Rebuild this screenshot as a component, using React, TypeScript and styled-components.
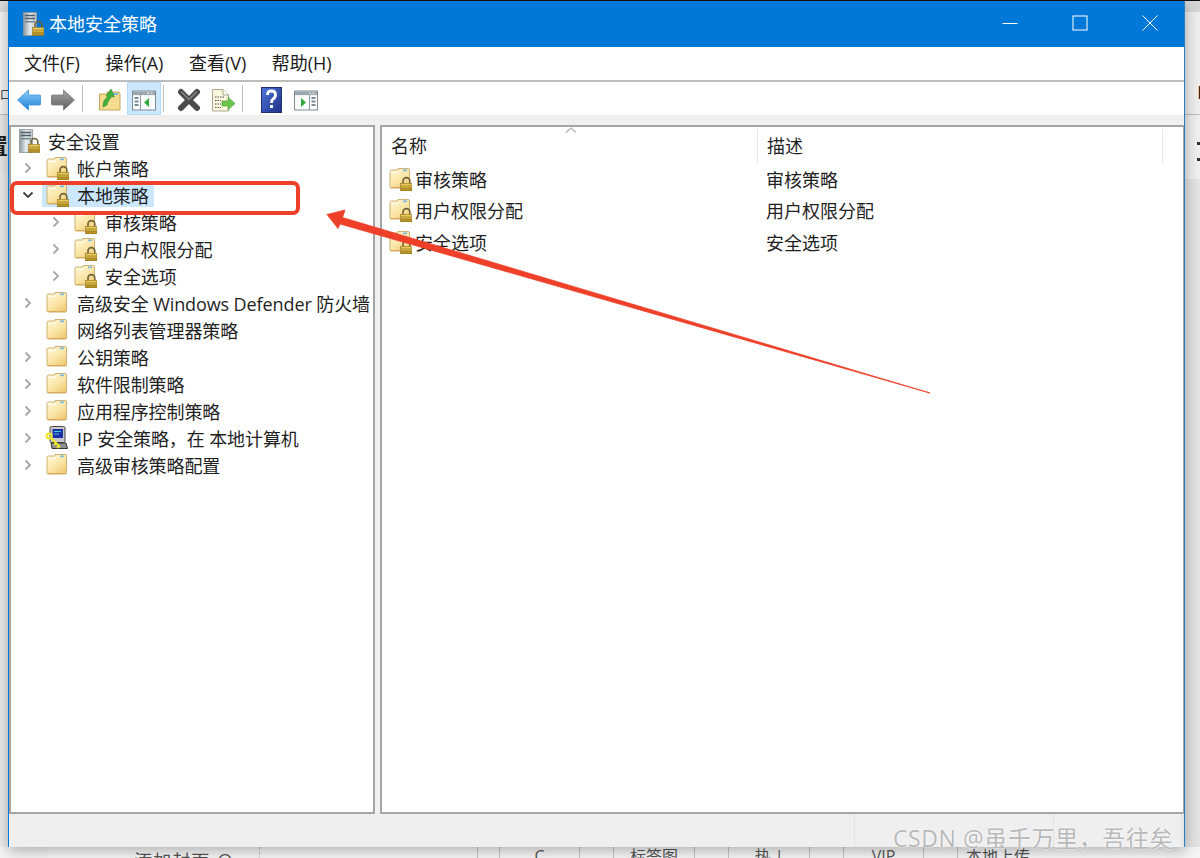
import styled, { createGlobalStyle } from 'styled-components';

const FONT = '"Open Sans", "Noto Sans CJK SC", "Noto Sans", sans-serif';

const GlobalStyle = createGlobalStyle`
  html, body {
    margin: 0;
    padding: 0;
    background: #f4f4f4;
  }
  * {
    box-sizing: border-box;
  }
`;

// ---------- icons ----------

const FolderIcon = ({ lock = false }: { lock?: boolean }) => (
  <svg width="24" height="24" viewBox="0 0 24 24">
    <defs>
      <linearGradient id="folderFill" x1="0" y1="0" x2="0.7" y2="1">
        <stop offset="0" stopColor="#fff8d8" />
        <stop offset="0.6" stopColor="#fbe6a8" />
        <stop offset="1" stopColor="#f0cc78" />
      </linearGradient>
      <linearGradient id="lockFill" x1="0" y1="0" x2="0" y2="1">
        <stop offset="0" stopColor="#f2d566" />
        <stop offset="1" stopColor="#a98518" />
      </linearGradient>
    </defs>
    <path d="M2 4.5 Q2 3 3.5 3 H10 V1.5 H20 Q21.5 1.5 21.5 3 V20 Q21.5 21 20.5 21 H3 Q2 21 2 20 Z" fill="url(#folderFill)" stroke="#cdb273" strokeWidth="1" />
    <path d="M3 5 H9 L11 3 V6 H3 Z" fill="#fff" opacity="0.7" />
    <rect x="15" y="2.4" width="4" height="1.8" fill="#7cbce0" />
    <path d="M3 20.5 H20.5" stroke="#d7a95a" strokeWidth="1" />
    {lock && (
      <g>
        <path d="M15 17 V14 a3.4 3.4 0 0 1 6.8 0 V17" fill="none" stroke="#6e6238" strokeWidth="1.6" />
        <rect x="12.5" y="16.4" width="11.5" height="7.6" fill="url(#lockFill)" stroke="#93741c" strokeWidth="0.6" />
        <path d="M13 19 H23.5 M13 21.5 H23.5" stroke="#8e701c" strokeWidth="0.7" opacity="0.7" />
      </g>
    )}
  </svg>
);

const ServerIcon = () => (
  <svg width="21" height="24" viewBox="0 0 21 24">
    <defs>
      <linearGradient id="towerFill" x1="0" y1="0" x2="1" y2="0">
        <stop offset="0" stopColor="#8d979c" />
        <stop offset="0.5" stopColor="#e6ebee" />
        <stop offset="1" stopColor="#bcc5ca" />
      </linearGradient>
      <linearGradient id="serverLock" x1="0" y1="0" x2="0" y2="1">
        <stop offset="0" stopColor="#f2d566" />
        <stop offset="1" stopColor="#a98518" />
      </linearGradient>
    </defs>
    <rect x="0.5" y="0.5" width="13" height="23" fill="url(#towerFill)" stroke="#8c979d" strokeWidth="0.8" />
    <path d="M2 3.5 H12 M2 6.5 H12" stroke="#4f5e68" strokeWidth="1.5" />
    <rect x="2" y="9" width="10" height="1.4" fill="#70808a" />
    <path d="M12 16 V13 a3.4 3.4 0 0 1 6.8 0 V16" fill="none" stroke="#6e6238" strokeWidth="1.5" />
    <rect x="9.5" y="15.5" width="11.5" height="8" fill="url(#serverLock)" stroke="#93741c" strokeWidth="0.6" />
    <path d="M10 18 H20.5 M10 20.8 H20.5" stroke="#8e701c" strokeWidth="0.7" opacity="0.7" />
  </svg>
);

const KeyMonitorIcon = () => (
  <svg width="24" height="24" viewBox="0 0 24 24">
    <rect x="5" y="0.5" width="15" height="16" rx="1.5" fill="#c8c8c8" stroke="#4a4a4a" strokeWidth="1" />
    <rect x="7.5" y="3" width="10.5" height="9" fill="#1c2fa8" />
    <path d="M9 5.5 H16 M9 8 H14" stroke="#39d0c8" strokeWidth="1" />
    <path d="M6 17 H21 L22.5 22.5 H7 Z" fill="#8f8f8f" stroke="#333" strokeWidth="1" />
    <circle cx="4" cy="10" r="2.6" fill="none" stroke="#f3e82a" strokeWidth="2" />
    <path d="M6 12 L15 21 M11 17 L9 19 M14 20 L12 22" stroke="#f3e82a" strokeWidth="2" />
  </svg>
);

const BackIcon = () => (
  <svg width="24" height="24" viewBox="0 0 24 24">
    <defs>
      <linearGradient id="backFill" x1="0" y1="0" x2="0" y2="1">
        <stop offset="0" stopColor="#8ed0fb" />
        <stop offset="1" stopColor="#1c80d8" />
      </linearGradient>
    </defs>
    <path d="M0.5 12 L11.5 2 V7 H22 Q24 7 24 9 V15 Q24 17 22 17 H11.5 V22 Z" fill="url(#backFill)" stroke="#3f93d8" strokeWidth="0.8" />
  </svg>
);

const ForwardIcon = () => (
  <svg width="24" height="24" viewBox="0 0 24 24">
    <defs>
      <linearGradient id="fwdFill" x1="0" y1="0" x2="0" y2="1">
        <stop offset="0" stopColor="#a5a5a5" />
        <stop offset="1" stopColor="#5f5f5f" />
      </linearGradient>
    </defs>
    <path d="M23.5 12 L12.5 2 V7 H2 Q0 7 0 9 V15 Q0 17 2 17 H12.5 V22 Z" fill="url(#fwdFill)" stroke="#767676" strokeWidth="0.8" />
  </svg>
);

const FolderUpIcon = () => (
  <svg width="24" height="24" viewBox="0 0 24 24">
    <path d="M1.5 6 H9 V4 H20 Q22 4 22 6 V22 H1.5 Z" fill="#f6dc8e" stroke="#c3a45a" strokeWidth="1" />
    <rect x="14" y="5" width="6" height="2" fill="#7cbce0" />
    <path d="M5 19 Q5 11 10 9 L8 8 L13 1 L16.5 9 L14 8.6 Q10 12 9 17 Z" fill="#41ae3d" stroke="#2c8a2a" strokeWidth="0.6" />
  </svg>
);

const PaneIcon = ({ flip = false }: { flip?: boolean }) => (
  <svg width="24" height="24" viewBox="0 0 24 24">
    <rect x="0.5" y="3" width="23" height="19" fill="#fbfcfd" stroke="#7f8b94" strokeWidth="1" />
    <rect x="1" y="3.5" width="22" height="3.6" fill="#9aa5ad" />
    <path d="M15 5.2 H17 M18.5 5.2 H20.5" stroke="#fff" strokeWidth="1" />
    {flip ? (
      <g>
        <path d="M15.5 7 V22" stroke="#8d99a2" strokeWidth="1" />
        <path d="M17.5 10 H21.5 M17.5 13.5 H21.5 M17.5 17 H21.5" stroke="#7b8b98" strokeWidth="2" />
        <path d="M7 10 L12 14.5 L7 19 Z" fill="#2faa3a" />
      </g>
    ) : (
      <g>
        <path d="M8.5 7 V22" stroke="#8d99a2" strokeWidth="1" />
        <path d="M2.5 10 H6.5 M2.5 13.5 H6.5 M2.5 17 H6.5" stroke="#7b8b98" strokeWidth="2" />
        <path d="M17 10 L12 14.5 L17 19 Z" fill="#2faa3a" />
      </g>
    )}
  </svg>
);

const DeleteIcon = () => (
  <svg width="24" height="24" viewBox="0 0 24 24">
    <path d="M4 4 L20 20 M20 4 L4 20" stroke="#4b4b4b" strokeWidth="6" strokeLinecap="round" />
    <path d="M4.5 4 L12 11.5 M19.5 4 L13 10.5" stroke="#8b8b8b" strokeWidth="1.4" strokeLinecap="round" />
  </svg>
);

const ExportIcon = () => (
  <svg width="24" height="24" viewBox="0 0 24 24">
    <path d="M1.5 1.5 H12 L17.5 7 V23 H1.5 Z" fill="#fbf7dc" stroke="#a9a78f" strokeWidth="1" />
    <path d="M12 1.5 V7 H17.5" fill="#fff" stroke="#a9a78f" strokeWidth="1" />
    <path d="M4 9 H13 M4 12.5 H10 M4 16 H10 M4 19.5 H10" stroke="#555" strokeWidth="1" strokeDasharray="1.5 1" />
    <path d="M11 13 H17 V9 L24 15.5 L17 22 V18 H11 Z" fill="#6cc54c" stroke="#4b9e35" strokeWidth="0.6" />
  </svg>
);

const HelpIcon = () => (
  <svg width="22" height="26" viewBox="0 0 22 26">
    <defs>
      <linearGradient id="helpFill" x1="0" y1="0" x2="1" y2="1">
        <stop offset="0" stopColor="#4f78d8" />
        <stop offset="1" stopColor="#1c2f88" />
      </linearGradient>
    </defs>
    <rect x="0.5" y="0.5" width="20" height="25" fill="url(#helpFill)" stroke="#24306e" strokeWidth="1" />
    <path d="M6.5 8 Q6.5 4 10.5 4 Q14.5 4 14.5 8 Q14.5 10.5 12 12 Q10.5 13 10.5 16" fill="none" stroke="#fff" strokeWidth="2.8" />
    <rect x="9" y="18" width="3" height="3" fill="#fff" />
  </svg>
);

const Chevron = ({ open = false }: { open?: boolean }) => (
  <svg width="14" height="14" viewBox="0 0 14 14">
    {open ? (
      <path d="M2.5 4.5 L7 9 L11.5 4.5" fill="none" stroke="#404040" strokeWidth="1.8" />
    ) : (
      <path d="M4.5 2.5 L9 7 L4.5 11.5" fill="none" stroke="#a6a6a6" strokeWidth="1.8" />
    )}
  </svg>
);

// ---------- data ----------

type TreeItem = {
  label: string;
  level: number;
  icon: 'lock' | 'plain' | 'key';
  arrow: boolean;
  open?: boolean;
  selected?: boolean;
};

const treeItems: TreeItem[] = [
  { label: '帐户策略', level: 0, icon: 'lock', arrow: true },
  { label: '本地策略', level: 0, icon: 'lock', arrow: true, open: true, selected: true },
  { label: '审核策略', level: 1, icon: 'lock', arrow: true },
  { label: '用户权限分配', level: 1, icon: 'lock', arrow: true },
  { label: '安全选项', level: 1, icon: 'lock', arrow: true },
  { label: '高级安全 Windows Defender 防火墙', level: 0, icon: 'plain', arrow: true },
  { label: '网络列表管理器策略', level: 0, icon: 'plain', arrow: false },
  { label: '公钥策略', level: 0, icon: 'plain', arrow: true },
  { label: '软件限制策略', level: 0, icon: 'plain', arrow: true },
  { label: '应用程序控制策略', level: 0, icon: 'plain', arrow: true },
  { label: 'IP 安全策略，在 本地计算机', level: 0, icon: 'key', arrow: true },
  { label: '高级审核策略配置', level: 0, icon: 'plain', arrow: true },
];

const listItems = ['审核策略', '用户权限分配', '安全选项'];
const menus = ['文件(F)', '操作(A)', '查看(V)', '帮助(H)'];

// ---------- app ----------

const App = () => (
  <>
    <GlobalStyle />
    <Page>
      <MainRow>
        <LeftEdge>
          <EdgeBand $height={11} $bg="#dcdcdc" />
          <EdgeBand $height={102} $bg="#f6f6f6" $align="flex-end">
            <EdgeSmall>口·</EdgeSmall>
          </EdgeBand>
          <EdgeBand $height={56} $bg="#e9e9e9" $justify="flex-end" $align="flex-start" $line>
            <EdgeBold>置</EdgeBold>
          </EdgeBand>
          <EdgeBand $height={677} $bg="#ededed" />
        </LeftEdge>

        <Window>
          <TitleBar>
            <TitleIcon>
              <ServerIcon />
            </TitleIcon>
            <TitleText>本地安全策略</TitleText>
            <WindowControls>
              <ControlButton>
                <svg width="16" height="16" viewBox="0 0 16 16">
                  <path d="M0.5 8.5 H15.5" stroke="#fff" strokeWidth="1" />
                </svg>
              </ControlButton>
              <ControlButton>
                <svg width="16" height="16" viewBox="0 0 16 16">
                  <rect x="1" y="1" width="14" height="14" fill="none" stroke="#fff" strokeWidth="1" />
                </svg>
              </ControlButton>
              <ControlButton>
                <svg width="16" height="16" viewBox="0 0 16 16">
                  <path d="M0.5 0.5 L15.5 15.5 M15.5 0.5 L0.5 15.5" stroke="#fff" strokeWidth="1" />
                </svg>
              </ControlButton>
            </WindowControls>
          </TitleBar>

          <MenuBar>
            {menus.map((m) => (
              <MenuItem key={m}>{m}</MenuItem>
            ))}
          </MenuBar>

          <Toolbar>
            <ToolButton>
              <BackIcon />
            </ToolButton>
            <ToolButton>
              <ForwardIcon />
            </ToolButton>
            <ToolSeparator $after={10} />
            <ToolButton>
              <FolderUpIcon />
            </ToolButton>
            <ToolButton $active>
              <PaneIcon />
            </ToolButton>
            <ToolSeparator $after={8} />
            <ToolButton>
              <DeleteIcon />
            </ToolButton>
            <ToolButton>
              <ExportIcon />
            </ToolButton>
            <ToolSeparator $after={12} />
            <ToolButton>
              <HelpIcon />
            </ToolButton>
            <ToolButton>
              <PaneIcon flip />
            </ToolButton>
          </Toolbar>

          <Panels>
            <TreePanel>
              <TreeRow $indent={5}>
                <TreeLabel>
                  <ServerIcon />
                  {'安全设置'}
                </TreeLabel>
              </TreeRow>
              {treeItems.map((item) => (
                <TreeRow key={item.label} $indent={item.level === 1 ? 38 : 10}>
                  <ArrowBox>{item.arrow && <Chevron open={item.open} />}</ArrowBox>
                  <TreeLabel $selected={item.selected}>
                    {item.icon === 'key' ? <KeyMonitorIcon /> : <FolderIcon lock={item.icon === 'lock'} />}
                    {item.label}
                  </TreeLabel>
                </TreeRow>
              ))}
            </TreePanel>

            <ListPanel>
              <ListHeader>
                <SortCaret>
                  <svg width="12" height="6" viewBox="0 0 12 6">
                    <path d="M1 5.5 L6 1 L11 5.5" fill="none" stroke="#b0b0b0" strokeWidth="1.2" />
                  </svg>
                </SortCaret>
                <HeaderCell>名称</HeaderCell>
                <HeaderCell>描述</HeaderCell>
                <HeaderEnd />
              </ListHeader>
              {listItems.map((name) => (
                <ListRow key={name}>
                  <NameCell>
                    <FolderIcon lock />
                    {name}
                  </NameCell>
                  <DescCell>{name}</DescCell>
                </ListRow>
              ))}
            </ListPanel>
          </Panels>

          <StatusBar>
            <StatusCell $width={846} />
            <StatusCell $width={199} />
            <StatusCell $width={128} />
            <StatusCell $width={2} />
          </StatusBar>
        </Window>

        <RightEdge>
          <EdgeBand $height={11} $bg="#d6d6d6" />
          <EdgeBand $height={102} $bg="#efefef" $align="flex-end">
            <EdgeLetter>H</EdgeLetter>
          </EdgeBand>
          <EdgeBand $height={65} $bg="#f0f0f0" $line>
            <EdgeDots>
              <Dot />
              <Dot />
            </EdgeDots>
          </EdgeBand>
          <EdgeBand $height={668} $bg="#e4e4e4" />
        </RightEdge>
      </MainRow>

      <BehindStrip>
        <CoverCell>添加封面 ⊙</CoverCell>
        <BehindCell $width={218} $line="dashed" />
        <BehindCell $width={22} $line="solid" />
        <BehindCell $width={80} $line="solid">
          C
        </BehindCell>
        <BehindCell $width={34} $line="solid" />
        <BehindCell $width={81} $line="solid">
          标签图
        </BehindCell>
        <BehindCell $width={34} $line="solid" />
        <BehindCell $width={81} $line="solid">
          热 |
        </BehindCell>
        <BehindCell $width={34} $line="solid" />
        <BehindCell $width={80} $line="solid">
          VIP
        </BehindCell>
        <BehindCell $width={34} $line="solid" />
        <BehindCell $width={81} $line="solid">
          本地上传
        </BehindCell>
      </BehindStrip>

      <RedBox />
      <ArrowOverlay width="1200" height="858" viewBox="0 0 1200 858">
        <path
          d="M327 214.5 L345 210 L342.5 217.5 L930 393 L340 224 L338 228.5 Z"
          fill="#ee4028"
          stroke="#ee4028"
          strokeWidth="0.8"
          strokeLinejoin="round"
        />
      </ArrowOverlay>
      <Watermark>CSDN @虽千万里，吾往矣</Watermark>
    </Page>
  </>
);

export default App;

// ---------- styles ----------

const Page = styled.div`
  position: relative;
  width: 1200px;
  height: 858px;
  overflow: hidden;
  border-top: 1px solid #111;
  background: #f4f4f4;
  font-family: ${FONT};
`;

const MainRow = styled.div`
  display: flex;
  height: 846px;
`;

const LeftEdge = styled.div`
  width: 8px;
  flex-shrink: 0;
  overflow: hidden;
`;

const RightEdge = styled.div`
  width: 15px;
  flex-shrink: 0;
  overflow: hidden;
`;

const EdgeBand = styled.div<{ $height: number; $bg: string; $align?: string; $justify?: string; $line?: boolean }>`
  display: flex;
  height: ${(p) => p.$height}px;
  background: ${(p) => p.$bg};
  align-items: ${(p) => p.$align || 'flex-start'};
  justify-content: ${(p) => p.$justify || 'flex-start'};
  overflow: hidden;
  border-top: ${(p) => (p.$line ? '1px solid #bdbdbd' : 'none')};
`;

const EdgeSmall = styled.span`
  flex-shrink: 0;
  width: 30px;
  margin-bottom: 12px;
  font-size: 11px;
  line-height: 14px;
  color: #222;
`;

const EdgeBold = styled.span`
  flex-shrink: 0;
  margin-top: 17px;
  font-size: 22px;
  line-height: 26px;
  font-weight: 700;
  color: #222;
`;

const EdgeLetter = styled.span`
  margin: 0 0 12px 12px;
  font-size: 19px;
  line-height: 20px;
  color: #222;
`;

const EdgeDots = styled.div`
  display: flex;
  flex-direction: column;
  gap: 13px;
  margin: 27px 0 0 12px;
`;

const Dot = styled.span`
  width: 3px;
  height: 3px;
  background: #333;
`;

const Window = styled.div`
  display: flex;
  flex-direction: column;
  position: relative;
  z-index: 1;
  width: 1177px;
  height: 846px;
  background: #f0f0f0;
  border-left: 1px solid #0078d7;
  border-right: 1px solid #2a7fc4;
  box-shadow: 0 3px 14px rgba(0, 0, 0, 0.32);
`;

const TitleBar = styled.div`
  display: flex;
  align-items: center;
  height: 46px;
  flex-shrink: 0;
  padding-left: 14px;
  background: #0078d7;
  color: #fff;
`;

const TitleIcon = styled.span`
  display: flex;
  margin-top: -1px;
`;

const TitleText = styled.span`
  margin-left: 5px;
  font-size: 18px;
  line-height: 24px;
`;

const WindowControls = styled.div`
  display: flex;
  margin-left: auto;
  margin-right: -1px;
`;

const ControlButton = styled.div`
  display: flex;
  align-items: center;
  justify-content: center;
  width: 70px;
  height: 46px;
  padding-bottom: 2px;
`;

const MenuBar = styled.div`
  display: flex;
  align-items: center;
  gap: 25.5px;
  height: 35px;
  flex-shrink: 0;
  padding-left: 15px;
  background: #fff;
  border-bottom: 2px solid #bdbdbd;
`;

const MenuItem = styled.span`
  font-size: 18px;
  line-height: 33px;
  color: #1a1a1a;
`;

const Toolbar = styled.div`
  display: flex;
  align-items: center;
  height: 33px;
  flex-shrink: 0;
  padding-left: 3px;
  background: #fff;
`;

const ToolButton = styled.div<{ $active?: boolean }>`
  display: flex;
  align-items: center;
  justify-content: center;
  width: 34px;
  height: 33px;
  padding-top: 2px;
  background: ${(p) => (p.$active ? '#cce8ff' : 'transparent')};
  border: 1px solid ${(p) => (p.$active ? '#b5dcfb' : 'transparent')};
`;

const ToolSeparator = styled.div<{ $after: number }>`
  width: 1px;
  height: 27px;
  margin: 0 ${(p) => p.$after}px 0 2px;
  background: #bfbfbf;
`;

const Panels = styled.div`
  display: flex;
  flex: 1;
  min-height: 0;
  gap: 5px;
  padding-top: 10px;
  background: #f0f0f0;
`;

const TreePanel = styled.div`
  width: 366px;
  flex-shrink: 0;
  background: #fff;
  border: 2px solid #a3a5a8;
`;

const TreeRow = styled.div<{ $indent: number }>`
  display: flex;
  align-items: center;
  height: 27px;
  padding-left: ${(p) => p.$indent}px;
`;

const ArrowBox = styled.span`
  display: flex;
  width: 14px;
  height: 14px;
  margin-right: 7px;
  flex-shrink: 0;
`;

const TreeLabel = styled.div<{ $selected?: boolean }>`
  display: flex;
  align-items: center;
  gap: 8px;
  height: 25px;
  padding: 0 5px 0 3px;
  white-space: nowrap;
  font-size: 18px;
  letter-spacing: -0.1px;
  color: #1f1f1f;
  background: ${(p) => (p.$selected ? '#cce8ff' : 'transparent')};
`;

const ListPanel = styled.div`
  flex: 1;
  background: #fff;
  border: 2px solid #a3a5a8;
  border-right-width: 1px;
`;

const ListHeader = styled.div`
  display: grid;
  grid-template-columns: 376px 405px 1fr;
  position: relative;
  height: 36px;
  padding-top: 2px;
`;

const SortCaret = styled.span`
  position: absolute;
  left: 183px;
  top: 0;
  display: flex;
`;

const HeaderCell = styled.div`
  padding-left: 9px;
  font-size: 18px;
  line-height: 34px;
  color: #1f1f1f;
  border-right: 1px solid #e5e5e5;
`;

const HeaderEnd = styled.div``;

const ListRow = styled.div`
  display: grid;
  grid-template-columns: 376px 1fr;
  align-items: center;
  height: 31.5px;
`;

const NameCell = styled.div`
  display: flex;
  align-items: center;
  gap: 3px;
  padding-left: 6px;
  font-size: 18px;
  color: #1f1f1f;
`;

const DescCell = styled.div`
  padding-left: 8px;
  font-size: 18px;
  color: #1f1f1f;
`;

const StatusBar = styled.div`
  display: flex;
  height: 33px;
  flex-shrink: 0;
  background: #efefef;
`;

const StatusCell = styled.div<{ $width: number }>`
  width: ${(p) => p.$width}px;
  border-right: 1px solid #e2e2e2;
`;

const BehindStrip = styled.div`
  display: flex;
  height: 11px;
  margin-left: 48px;
  width: 1118px;
  overflow: hidden;
  background: #f7f7f7;
`;

const CoverCell = styled.div`
  flex-shrink: 0;
  width: 211px;
  padding-right: 24px;
  margin-top: 5px;
  text-align: right;
  font-size: 18px;
  line-height: 18px;
  letter-spacing: 1px;
  white-space: nowrap;
  color: #555;
`;

const BehindCell = styled.div<{ $width: number; $line?: string }>`
  flex-shrink: 0;
  width: ${(p) => p.$width}px;
  height: 18px;
  text-align: center;
  font-size: 16px;
  line-height: 18px;
  white-space: nowrap;
  color: #555;
  border-left: ${(p) => (p.$line ? `1px ${p.$line} #c4c4c4` : 'none')};
`;

const RedBox = styled.div`
  position: absolute;
  z-index: 2;
  left: 10px;
  top: 180px;
  width: 290px;
  height: 34px;
  border: 4px solid #ee4028;
  border-radius: 7px;
`;

const ArrowOverlay = styled.svg`
  position: absolute;
  z-index: 2;
  left: 0;
  top: -1px;
`;

const Watermark = styled.div`
  position: absolute;
  z-index: 3;
  left: 893px;
  top: 823px;
  font-size: 23px;
  line-height: 28px;
  letter-spacing: 0.6px;
  white-space: nowrap;
  color: #b8b8b8;
  text-shadow: 0 0 2px #fff, 0 0 1px #fff;
`;
